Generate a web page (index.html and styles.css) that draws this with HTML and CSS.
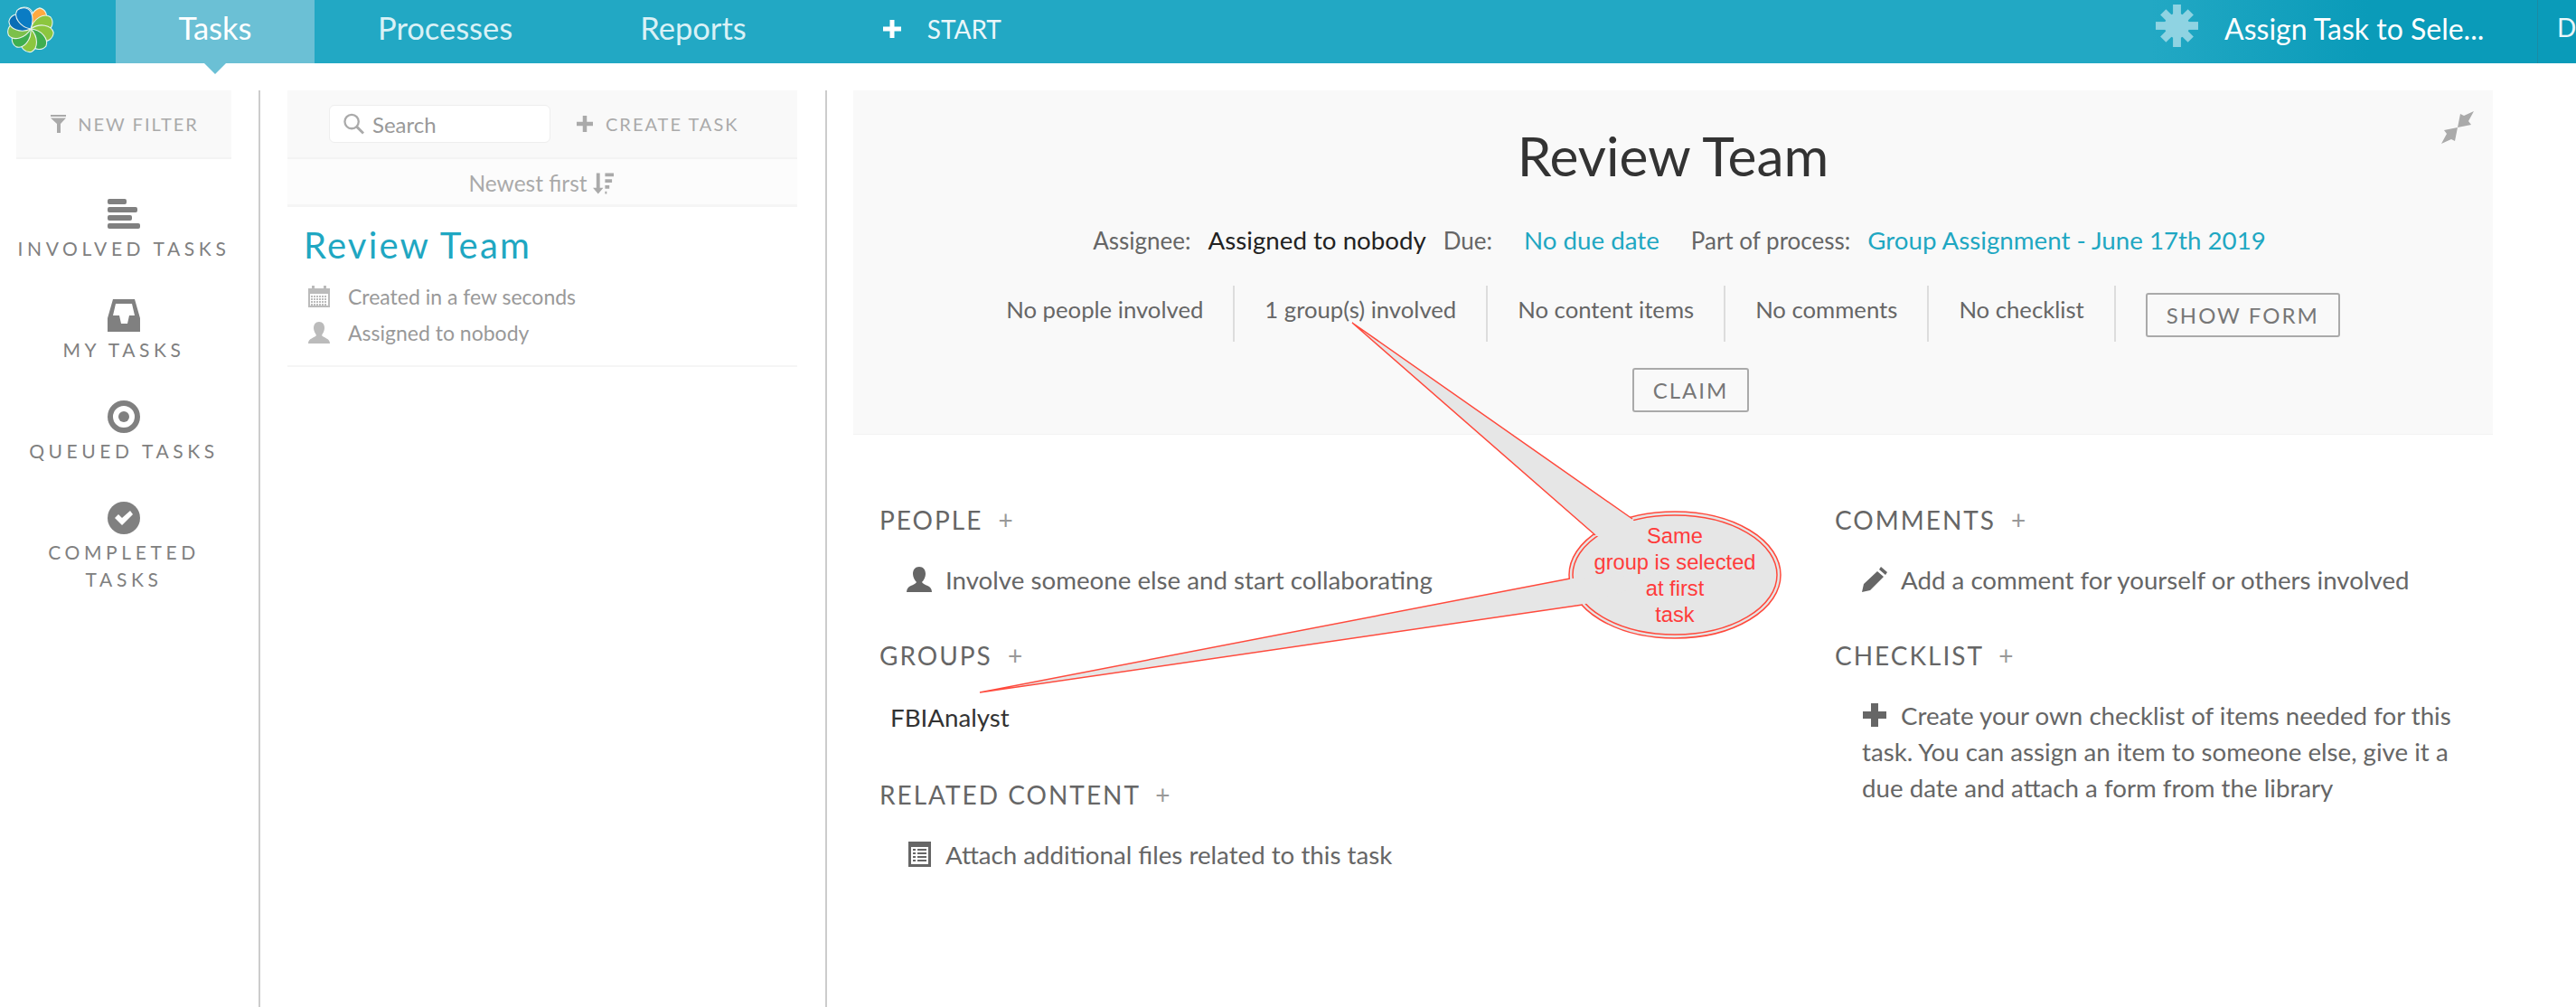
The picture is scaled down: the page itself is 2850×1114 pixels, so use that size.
FILE: index.html
```html
<!DOCTYPE html>
<html lang="en">
<head>
    <meta charset="UTF-8">
    <title>Task App</title>
    <link rel="stylesheet" href="styles.css">
</head>
<body>
<div class="app">
    <div class="topbar">
        <div class="logo-cell">
            <svg class="logo" viewBox="-27 -27 54 54">
                <g stroke="#e8f4ec" stroke-width="1.1">
                    <path class="petal" fill="#0a78c2" transform="rotate(-20)" d="M0 0C-10-7-12-20-5-25C1-27 8-23 8-16C8-9 4-4 0 0Z"/>
                    <path class="petal" fill="#ffa940" transform="rotate(30)" d="M0 0C-8-6-9-19-3-25C3-27 10-23 9-15C9-9 4-4 0 0Z"/>
                    <path class="petal" fill="#8cc63f" transform="rotate(70)" d="M0 0C-10-7-12-20-5-25C1-27 8-23 8-16C8-9 4-4 0 0Z"/>
                    <path class="petal" fill="#8cc63f" transform="rotate(110)" d="M0 0C-10-7-12-20-5-25C1-27 8-23 8-16C8-9 4-4 0 0Z"/>
                    <path class="petal" fill="#3fae4f" transform="rotate(150)" d="M0 0C-10-7-12-20-5-25C1-27 8-23 8-16C8-9 4-4 0 0Z"/>
                    <path class="petal" fill="#8cc63f" transform="rotate(190)" d="M0 0C-10-7-12-20-5-25C1-27 8-23 8-16C8-9 4-4 0 0Z"/>
                    <path class="petal" fill="#3fae4f" transform="rotate(230)" d="M0 0C-10-7-12-20-5-25C1-27 8-23 8-16C8-9 4-4 0 0Z"/>
                    <path class="petal" fill="#7cc04b" transform="rotate(265)" d="M0 0C-10-7-12-20-5-25C1-27 8-23 8-16C8-9 4-4 0 0Z"/>
                    <path class="petal" fill="#0a6db5" transform="rotate(300)" d="M0 0C-10-7-12-20-5-25C1-27 8-23 8-16C8-9 4-4 0 0Z"/>
                    <path class="petal" fill="#0a7cc4" transform="rotate(335)" d="M0 0C-10-7-12-20-5-25C1-27 8-23 8-16C8-9 4-4 0 0Z"/>
                </g>
            </svg>
        </div>
        <a class="tab tab-active">Tasks</a>
        <a class="tab">Processes</a>
        <a class="tab">Reports</a>
        <a class="start">
            <svg class="start-plus" viewBox="0 0 20 20"><path fill="#fff" d="M7.500 0h5v7.500H20v5h-7.500V20h-5v-7.500H0v-5h7.500z"/></svg>
            START
        </a>
        <div class="app-name">
            <svg class="star" viewBox="0 0 48 48"><g fill="#8fd3e2"><circle cx="24" cy="24" r="14"/><rect x="19.500" y="0" width="9" height="48"/><rect x="0" y="19.500" width="48" height="9"/><rect x="19.500" y="2" width="9" height="44" transform="rotate(45 24 24)"/><rect x="19.500" y="2" width="9" height="44" transform="rotate(-45 24 24)"/></g></svg>
            <span class="app-title">Assign Task to Sele...</span>
        </div>
        <div class="user-cell">D</div>
    </div>

    <div class="workspace">
        <div class="filters">
            <div class="new-filter">
                <svg class="funnel" viewBox="0 0 17 20"><path fill="#aaa" d="M0 0h17v2H0zM0 3.500h17L11 10v10H7V10z"/></svg>
                NEW FILTER
            </div>
            <a class="filter first-filter">
                <svg class="filter-icon" viewBox="0 0 36 34"><g fill="#808080"><rect x="0" y="0" width="21" height="6" rx="2"/><rect x="0" y="9" width="33" height="6" rx="2"/><rect x="0" y="18" width="27" height="6" rx="2"/><rect x="0" y="27" width="36" height="6" rx="2"/></g></svg>
                <span class="filter-label">INVOLVED TASKS</span>
            </a>
            <a class="filter">
                <svg class="filter-icon" viewBox="0 0 36 36"><path fill="#808080" fill-rule="evenodd" d="M6 0h24l6 21v15H0V21zM9 5L6 18h7l2 9h7l2-9h6L27 5z"/></svg>
                <span class="filter-label">MY TASKS</span>
            </a>
            <a class="filter">
                <svg class="filter-icon" viewBox="0 0 36 36"><path fill="#808080" fill-rule="evenodd" d="M18 0a18 18 0 1 0 0 36a18 18 0 1 0 0-36zM18 6a12 12 0 1 1 0 24a12 12 0 1 1 0-24z"/><circle cx="18" cy="18" r="6" fill="#808080"/></svg>
                <span class="filter-label">QUEUED TASKS</span>
            </a>
            <a class="filter">
                <svg class="filter-icon" viewBox="0 0 36 36"><circle cx="18" cy="18" r="18" fill="#808080"/><path fill="#fff" d="M8 18l4-4 4 4 9-8 3 4-12 12z"/></svg>
                <span class="filter-label">COMPLETED TASKS</span>
            </a>
        </div>

        <div class="tasklist">
            <div class="list-tools">
                <div class="search">
                    <svg class="search-icon" viewBox="0 0 24 24"><circle cx="9.500" cy="9.500" r="8" fill="none" stroke="#aaa" stroke-width="2.400"/><path d="M15 15l8 8" stroke="#aaa" stroke-width="3"/></svg>
                    Search
                </div>
                <a class="create-task">
                    <svg class="create-plus" viewBox="0 0 20 20"><path fill="#aaa" d="M7.500 0h5v7.500H20v5h-7.500V20h-5v-7.500H0v-5h7.500z"/></svg>
                    CREATE TASK
                </a>
            </div>
            <div class="list-sort">
                Newest first
                <svg class="sort-icon" viewBox="0 0 24 24"><path fill="#aaa" d="M4 0h4v17h4l-6 7-6-7h4zM14 0h10v4H14zM14 7h8v4h-8zM14 14h5v4h-5zM14 21h2v3h-2z"/></svg>
            </div>
            <div class="task-item">
                <a class="task-name">Review Team</a>
                <div class="task-meta">
                    <svg class="meta-icon" viewBox="0 0 24 24"><path fill="#bbb" fill-rule="evenodd" d="M0 3h4V0h3v3h10V0h3v3h4v21H0zM2 9v13h20V9z"/><path stroke="#bbb" stroke-width="2" stroke-dasharray="2 1" d="M3 12h18M3 15h18M3 18h18M3 21h18"/></svg>
                    Created in a few seconds
                </div>
                <div class="task-meta">
                    <svg class="meta-icon" viewBox="0 0 24 24"><path fill="#bbb" d="M12 0c4 0 6 3 6 7c0 3-2 6-3 8c2 3 9 3 9 9H0c0-6 7-6 9-9c-1-2-3-5-3-8c0-4 2-7 6-7z"/></svg>
                    Assigned to nobody
                </div>
            </div>
        </div>

        <div class="detail">
            <div class="detail-head">
                <svg class="collapse" viewBox="0 0 36 36"><path fill="#aaa" d="M36 0L25 5l-4-2-3 15 15-3-3-4zM0 36l11-5 4 2 3-15-15 3 3 4z"/></svg>
                <h1 class="detail-title">Review Team</h1>
                <div class="detail-meta">
                    <span>Assignee:</span>
                    <span class="value gap-s">Assigned to nobody</span>
                    <span class="gap-s">Due:</span>
                    <a class="link gap-l">No due date</a>
                    <span class="gap-l">Part of process:</span>
                    <a class="link gap-s">Group Assignment - June 17th 2019</a>
                </div>
                <div class="detail-stats">
                    <div class="stat">No people involved</div>
                    <div class="stat">1 group(s) involved</div>
                    <div class="stat">No content items</div>
                    <div class="stat">No comments</div>
                    <div class="stat">No checklist</div>
                    <a class="btn show-form">SHOW FORM</a>
                </div>
                <div class="claim-row"><a class="btn">CLAIM</a></div>
            </div>
            <div class="detail-body">
                <div class="detail-col">
                    <div class="section">
                        <h3 class="section-title">PEOPLE <span class="add">+</span></h3>
                        <div class="section-text">
                            <svg class="text-icon" viewBox="0 0 28 28"><path fill="#666" d="M14 0c4.500 0 7 3 7 8c0 3-2 7-4 9c2 4 11 3 11 11H0c0-8 9-7 11-11c-2-2-4-6-4-9c0-5 2.500-8 7-8z"/></svg>Involve someone else and start collaborating
                        </div>
                    </div>
                    <div class="section section-groups">
                        <h3 class="section-title">GROUPS <span class="add">+</span></h3>
                        <div class="group-name">FBIAnalyst</div>
                    </div>
                    <div class="section">
                        <h3 class="section-title">RELATED CONTENT <span class="add">+</span></h3>
                        <div class="section-text">
                            <svg class="text-icon" viewBox="0 0 28 28"><path fill="#666" fill-rule="evenodd" d="M2 0h25v28H2zM5 6v19h19V6z"/><path stroke="#666" stroke-width="2" d="M7 9h3M12 9h10M7 13h3M12 13h10M7 17h3M12 17h10M7 21h3M12 21h10"/></svg>Attach additional files related to this task
                        </div>
                    </div>
                </div>
                <div class="detail-col">
                    <div class="section">
                        <h3 class="section-title">COMMENTS <span class="add">+</span></h3>
                        <div class="section-text">
                            <svg class="text-icon" viewBox="0 0 28 28"><path fill="#666" d="M21 0l7 6-2 3-7-6zM17 5l7 6-15 15-9 2 2-9z"/></svg>Add a comment for yourself or others involved
                        </div>
                    </div>
                    <div class="section">
                        <h3 class="section-title">CHECKLIST <span class="add">+</span></h3>
                        <div class="section-text">
                            <svg class="text-icon" viewBox="0 0 28 28"><path fill="#666" d="M10 1h8v9h9v8h-9v9h-8v-9H1v-8h9z"/></svg>Create your own checklist of items needed for this task. You can assign an item to someone else, give it a due date and attach a form from the library
                        </div>
                    </div>
                </div>
            </div>
        </div>
    </div>

    <!-- callout drawn over the screenshot -->
    <svg class="callout" viewBox="0 0 2850 1114">
        <ellipse class="bubble" cx="1853" cy="636" rx="117" ry="70"/>
        <ellipse class="bubble-inner" cx="1853" cy="636" rx="113" ry="66"/>
        <polygon class="tail" points="1496,357 1806,574 1853,636 1765,592"/>
        <polygon class="tail" points="1084,766 1737,640 1853,636 1751,669"/>
        <polyline class="tail-line" points="1765,592 1496,357 1806,574"/>
        <polyline class="tail-line" points="1737,640 1084,766 1751,669"/>
        <text class="callout-text" x="1853" y="601">Same</text>
        <text class="callout-text" x="1853" y="630">group is selected</text>
        <text class="callout-text" x="1853" y="659">at first</text>
        <text class="callout-text" x="1853" y="688">task</text>
    </svg>
</div>
</body>
</html>
```

FILE: styles.css
```css
html, body {
    margin: 0;
    padding: 0;
    background: #fff;
}

.app {
    position: relative;
    width: 2850px;
    height: 1114px;
    overflow: hidden;
    font-family: Lato, "Open Sans", sans-serif;
    color: #666;
}

/* top bar */
.topbar {
    display: flex;
    align-items: stretch;
    height: 70px;
    background: linear-gradient(to right, #22a8c4 0, #22a8c4 2380px, #0a9bb9 2620px);
    color: #fff;
}

.logo-cell {
    width: 128px;
    padding: 5px 0 0 7px;
    box-sizing: border-box;
}

.logo {
    display: block;
    width: 54px;
    height: 54px;
}

.tab {
    position: relative;
    padding: 0 71px 0 70px;
    font-size: 34.5px;
    line-height: 62px;
    color: #d9f1f6;
}

.tab-active {
    box-sizing: border-box;
    width: 220px;
    padding: 0;
    text-align: center;
    background: #6bc0d5;
    color: #fff;
}

.tab-active::after {
    content: "";
    position: absolute;
    left: 50%;
    bottom: -12px;
    margin-left: -12px;
    border-left: 12px solid transparent;
    border-right: 12px solid transparent;
    border-top: 12px solid #6bc0d5;
}

.start {
    display: flex;
    align-items: center;
    margin-left: 80px;
    font-size: 28px;
    padding-bottom: 6px;
    color: #eaf7fa;
}

.start-plus {
    width: 20px;
    height: 20px;
    margin-right: 29px;
}

.app-name {
    display: flex;
    align-items: center;
    margin-left: auto;
    padding-bottom: 8px;
}

.star {
    width: 47px;
    height: 47px;
    margin: 0 29px 6px 0;
}

.app-title {
    font-size: 32px;
    width: 346px;
}

.user-cell {
    box-sizing: border-box;
    width: 43px;
    padding-left: 21px;
    border-left: 1px solid #1a8ba5;
    font-size: 28px;
    line-height: 60px;
    color: #eaf7fa;
}

/* filters column */
.workspace {
    display: flex;
    height: 1014px;
    padding-top: 30px;
}

.filters {
    width: 268px;
    padding: 0 0 0 18px;
    border-right: 2px solid #ccc;
}

.new-filter {
    display: flex;
    align-items: center;
    justify-content: center;
    width: 236px;
    height: 74px;
    padding-left: 2px;
    background: #f9f9f9;
    border-bottom: 2px solid #f3f3f3;
    font-size: 20px;
    letter-spacing: 2px;
    color: #aaa;
}

.funnel {
    width: 17px;
    height: 20px;
    margin-right: 13px;
}

.filter {
    display: flex;
    flex-direction: column;
    align-items: center;
    width: 238px;
    margin-bottom: 41px;
}

.first-filter {
    margin-top: 43px;
}

.filter-icon {
    width: 36px;
    height: 36px;
    margin-bottom: 5px;
}

.filter-label {
    display: block;
    text-align: center;
    width: 238px;
    font-size: 21px;
    line-height: 30px;
    letter-spacing: 4.6px;
    color: #808080;
}

/* task list column */
.tasklist {
    width: 564px;
    padding: 0 31px 0 30px;
    border-right: 2px solid #ccc;
}

.list-tools {
    display: flex;
    align-items: center;
    height: 74px;
    padding-left: 46px;
    background: #f9f9f9;
    border-bottom: 2px solid #f3f3f3;
}

.search {
    display: flex;
    align-items: center;
    box-sizing: border-box;
    width: 245px;
    height: 42px;
    padding-left: 15px;
    background: #fff;
    border: 1px solid #eee;
    border-radius: 6px;
    font-size: 24px;
    color: #999;
}

.search-icon {
    width: 23px;
    height: 24px;
    margin-right: 9px;
}

.create-task {
    display: flex;
    align-items: center;
    margin-left: 29px;
    font-size: 20px;
    letter-spacing: 2px;
    color: #aaa;
}

.create-plus {
    width: 18px;
    height: 18px;
    margin-right: 14px;
}

.list-sort {
    display: flex;
    align-items: center;
    justify-content: center;
    box-sizing: border-box;
    height: 53px;
    padding: 3px 3px 0 0;
    background: #fcfcfc;
    border-bottom: 3px solid #f5f5f5;
    font-size: 24.500px;
    color: #aaa;
}

.sort-icon {
    width: 23px;
    height: 24px;
    margin-left: 6px;
}

.task-item {
    height: 177px;
    padding-left: 18px;
    border-bottom: 2px solid #f5f5f5;
    box-sizing: border-box;
}

.task-name {
    display: block;
    padding-top: 15px;
    font-size: 40px;
    line-height: 54px;
    letter-spacing: 2.2px;
    color: #1fa7c2;
}

.task-meta {
    display: flex;
    align-items: center;
    height: 40px;
    font-size: 23px;
    color: #999;
}

.task-meta:first-of-type {
    margin-top: 10px;
}

.meta-icon {
    width: 24px;
    height: 24px;
    margin: 0 20px 0 5px;
}

/* detail column */
.detail {
    width: 1814px;
    margin-left: 29px;
}

.detail-head {
    position: relative;
    height: 381px;
    background: #f9f9f9;
    border-bottom: 1px solid #f3f3f3;
    box-sizing: border-box;
    text-align: center;
    overflow: hidden;
}

.collapse {
    position: absolute;
    top: 23px;
    right: 21px;
    width: 36px;
    height: 36px;
}

.detail-title {
    margin: 30px 0 0;
    font-size: 60.500px;
    line-height: 84px;
    font-weight: 400;
    color: #333;
}

.detail-meta {
    display: flex;
    justify-content: center;
    align-items: baseline;
    margin-top: 32px;
    padding-left: 14px;
    font-size: 26px;
    line-height: 40px;
}

.value {
    font-size: 27.700px;
    color: #222;
}

.link {
    font-size: 27.700px;
    color: #1fa7c2;
}

.gap-s {
    margin-left: 19px;
}

.gap-l {
    margin-left: 35px;
}

.detail-stats {
    display: flex;
    justify-content: center;
    align-items: flex-start;
    margin-top: 30px;
    padding-right: 33px;
}

.stat {
    height: 62px;
    padding: 0 33px;
    border-right: 2px solid #ddd;
    font-size: 25.700px;
    line-height: 52px;
}

.btn {
    display: inline-block;
    box-sizing: border-box;
    border: 2px solid #aaa;
    border-radius: 3px;
    padding: 0 21px;
    height: 49px;
    font-size: 24px;
    line-height: 46px;
    letter-spacing: 2px;
    color: #777;
}

.show-form {
    margin: 8px 0 0 33px;
}

.claim-row {
    margin-top: 29px;
    padding-left: 39px;
}

.detail-body {
    display: grid;
    grid-template-columns: 1057px 1fr;
    padding: 74px 0 0 29px;
}

.section {
    margin-bottom: 43px;
}

.section-groups {
    margin-bottom: 45px;
}

.section-title {
    margin: 0 0 27px;
    font-size: 28px;
    line-height: 40px;
    font-weight: 400;
    letter-spacing: 2px;
    color: #666;
}

.add {
    margin-left: 8px;
    color: #999;
}

.section-text {
    width: 670px;
    padding-left: 30px;
    font-size: 27.700px;
    line-height: 40px;
}

.text-icon {
    width: 28px;
    height: 28px;
    margin-right: 15px;
    vertical-align: -3px;
}

.group-name {
    padding: 2px 0 0 12px;
    font-size: 27.700px;
    line-height: 40px;
    color: #333;
}

/* callout */
.callout {
    position: absolute;
    left: 0;
    top: 0;
    width: 2850px;
    height: 1114px;
    pointer-events: none;
}

.bubble {
    fill: #e6e6e6;
    stroke: #ff4a3d;
    stroke-width: 1.5;
}

.bubble-inner {
    fill: none;
    stroke: #ff4a3d;
    stroke-width: 1.5;
}

.tail {
    fill: #e6e6e6;
    stroke: none;
}

.tail-line {
    fill: none;
    stroke: #ff4a3d;
    stroke-width: 1.5;
}

.callout-text {
    font-family: "Liberation Sans", Arial, sans-serif;
    font-size: 23.700px;
    text-anchor: middle;
    fill: #ff3b3b;
}
```
